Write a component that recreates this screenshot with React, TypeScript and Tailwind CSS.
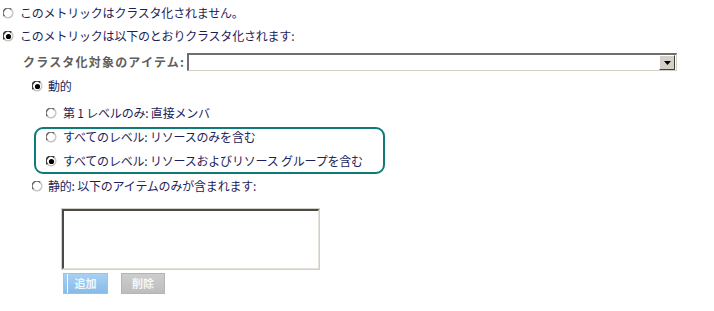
import React from 'react'

function Radio({ checked = false }: { checked?: boolean }) {
  return (
    <svg width="11" height="11" viewBox="0 0 11 11" className="shrink-0">
      <circle cx="5.5" cy="5.5" r="5" fill="#ffffff" />
      <path d="M1.6 8.4 A4.6 4.6 0 0 1 8.4 1.6" fill="none" stroke={checked ? '#3c3c3c' : '#6a6a6a'} strokeWidth={checked ? 1.8 : 1.5} />
      <path d="M8.4 1.6 A4.6 4.6 0 0 1 1.6 8.4" fill="none" stroke="#c8c4bc" strokeWidth="1.5" />
      {checked && <circle cx="5.5" cy="5.5" r="2.6" fill="#000000" />}
    </svg>
  )
}

function Row({ pl, gap, checked, children }: { pl: string; gap: string; checked?: boolean; children: React.ReactNode }) {
  return (
    <div className={`flex items-center h-[14px] ${pl}`}>
      <Radio checked={checked} />
      <span className={`${gap} leading-[14px] whitespace-nowrap tracking-[-0.2px]`}>{children}</span>
    </div>
  )
}

export default function App() {
  return (
    <div className="w-[714px] h-[311px] bg-white overflow-hidden text-[12px] text-[#1e1e5a] font-['Noto_Sans_CJK_JP','Noto_Sans',sans-serif]">
      <div className="flex flex-col">
        <div className="mt-[6px]">
          <Row pl="pl-[3px]" gap="ml-[6px]">このメトリックはクラスタ化されません。</Row>
        </div>
        <div className="mt-[9px]">
          <Row pl="pl-[3px]" gap="ml-[6px]" checked>このメトリックは以下のとおりクラスタ化されます:</Row>
        </div>

        {/* item selector */}
        <div className="mt-[10px] flex items-center h-[18px] pl-[23px]">
          <span className="w-[164px] font-bold text-[#5e5e5e] whitespace-nowrap leading-[18px] tracking-[1.2px]">クラスタ化対象のアイテム:</span>
          <div className="w-[490px] h-[18px] flex border-t-2 border-l-2 border-t-[#6e6e6e] border-l-[#6e6e6e] border-b border-r border-b-[#d4d0c8] border-r-[#d4d0c8] bg-white">
            <div className="flex-1" />
            <div className="w-[16px] h-[15px] mr-[1px] bg-[#d4d0c8] border border-t-white border-l-white border-b-[#404040] border-r-[#404040] flex items-center justify-center">
              <svg width="7" height="4" viewBox="0 0 7 4">
                <path d="M0 0 H7 L3.5 4 Z" fill="#000" />
              </svg>
            </div>
          </div>
        </div>

        <div className="mt-[8px]">
          <Row pl="pl-[32px]" gap="ml-[5px]" checked>動的</Row>
        </div>
        <div className="mt-[13px]">
          <Row pl="pl-[46px]" gap="ml-[6px]">第 1 レベルのみ: 直接メンバ</Row>
        </div>

        {/* highlighted options */}
        <div className="mt-[7px] ml-[34px] w-[351px] border-2 border-[#0f7a78] rounded-[9px] pt-[1px] pb-[4px]">
          <Row pl="pl-[10px]" gap="ml-[6px]">すべてのレベル: リソースのみを含む</Row>
          <div className="mt-[10px]">
            <Row pl="pl-[10px]" gap="ml-[6px]" checked>すべてのレベル: リソースおよびリソース グループを含む</Row>
          </div>
        </div>

        <div className="mt-[5px]">
          <Row pl="pl-[32px]" gap="ml-[5px]">静的: 以下のアイテムのみが含まれます:</Row>
        </div>

        {/* static list */}
        <div className="mt-[15px] ml-[61px] w-[259px] h-[62px] border border-[#d4d0c8] bg-white">
          <div className="w-full h-full border-t-2 border-l-2 border-t-[#4a4a4a] border-l-[#4a4a4a] border-b border-r border-b-[#e4e1da] border-r-[#e4e1da]" />
        </div>

        <div className="mt-[3px] ml-[63px] flex gap-[13px]">
          <div className="relative w-[45px] h-[21px] bg-gradient-to-b from-[#a8d0f2] to-[#86bbe8] border border-[#9cc2e2] flex items-center justify-center">
            <div className="absolute left-[3px] top-0 bottom-0 w-px bg-white" />
            <span className="text-[11px] font-bold text-white/85 leading-none">追加</span>
          </div>
          <div className="w-[44px] h-[21px] bg-gradient-to-b from-[#cdcdcd] to-[#bdbdbd] border border-[#b4b4b4] flex items-center justify-center">
            <span className="text-[11px] font-bold text-white/85 leading-none">削除</span>
          </div>
        </div>
      </div>
    </div>
  )
}
